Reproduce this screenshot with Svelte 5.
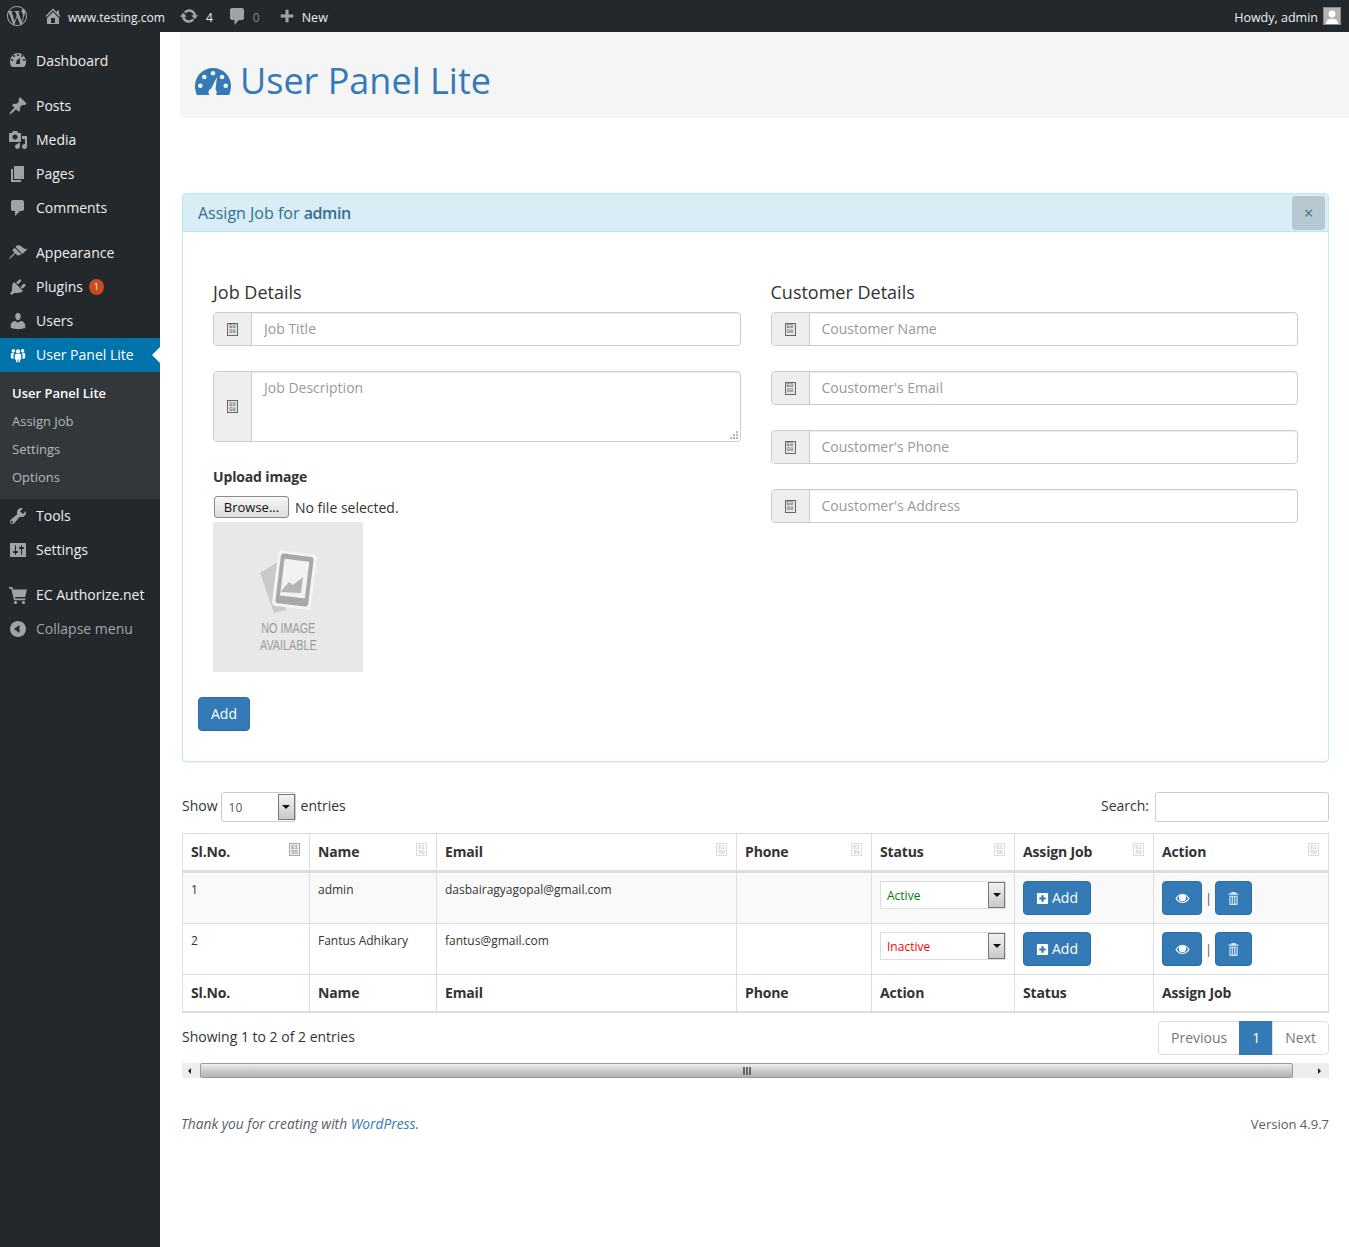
<script>
  const menuGroups = [
    [{ label: "Dashboard", icon: "dashboard" }],
    [
      { label: "Posts", icon: "posts" },
      { label: "Media", icon: "media" },
      { label: "Pages", icon: "pages" },
      { label: "Comments", icon: "comments" }
    ],
    [
      { label: "Appearance", icon: "appearance" },
      { label: "Plugins", icon: "plugins", badge: "1" },
      { label: "Users", icon: "users" },
      { label: "User Panel Lite", icon: "group", current: true, sub: ["User Panel Lite", "Assign Job", "Settings", "Options"] },
      { label: "Tools", icon: "tools" },
      { label: "Settings", icon: "settings" }
    ],
    [
      { label: "EC Authorize.net", icon: "cart" },
      { label: "Collapse menu", icon: "collapse", muted: true }
    ]
  ];

  const customerFields = ["Coustomer Name", "Coustomer's Email", "Coustomer's Phone", "Coustomer's Address"];

  const columns = [
    { name: "Sl.No.", foot: "Sl.No.", width: 127, code: ["E1", "55"], dark: true },
    { name: "Name", foot: "Name", width: 127, code: ["E1", "50"] },
    { name: "Email", foot: "Email", width: 300, code: ["E1", "50"] },
    { name: "Phone", foot: "Phone", width: 135, code: ["E1", "50"] },
    { name: "Status", foot: "Action", width: 143, code: ["E1", "50"] },
    { name: "Assign Job", foot: "Status", width: 139, code: ["E1", "50"] },
    { name: "Action", foot: "Assign Job", width: 175, code: ["E1", "50"] }
  ];

  const rows = [
    { id: 1, name: "admin", email: "dasbairagyagopal@gmail.com", status: "Active" },
    { id: 2, name: "Fantus Adhikary", email: "fantus@gmail.com", status: "Inactive" }
  ];
</script>

{#snippet menuIcon(name)}
  <svg class="menu-icon" viewBox="0 0 20 20" aria-hidden="true">
    {#if name === "dashboard"}
      <path fill-rule="evenodd" d="M3.76 16h12.48c1.1-1.43 1.76-3.21 1.76-5.14 0-4.66-3.58-8.86-8-8.860s-8 4.200-8 8.860c0 1.930.66 3.710 1.760 5.140zM10 3c.55 0 1 .45 1 1s-.45 1-1 1-1-.45-1-1 .45-1 1-1zM6 4c.55 0 1 .45 1 1s-.45 1-1 1-1-.45-1-1 .45-1 1-1zm8 0c.55 0 1 .45 1 1s-.45 1-1 1-1-.45-1-1 .45-1 1-1zm-5.370 5.550L12 7v6H8l.63-3.450zM4 8c.55 0 1 .45 1 1s-.45 1-1 1-1-.45-1-1 .45-1 1-1zm12 0c.55 0 1 .45 1 1s-.45 1-1 1-1-.45-1-1 .45-1 1-1z" />
    {:else if name === "posts"}
      <path d="M10.44 3.02l1.82-1.820 6.360 6.350-1.830 1.820c-1.050-.68-2.480-.57-3.410.36l-.75.75c-.92.93-1.040 2.350-.35 3.410l-1.830 1.820-2.410-2.410-2.800 2.790c-.42.42-3.380 2.710-3.800 2.290s1.860-3.390 2.280-3.810l2.790-2.790L4.100 9.360l1.830-1.820c1.050.69 2.480.57 3.400-.36l.75-.75c.93-.92 1.050-2.350.36-3.410z" />
    {:else if name === "media"}
      <path fill-rule="evenodd" d="M13 11V4c0-.55-.45-1-1-1h-1.670L9 1H5L3.670 3H2c-.55 0-1 .45-1 1v7c0 .55.45 1 1 1h10c.55 0 1-.45 1-1zM7 4.500c1.380 0 2.500 1.120 2.500 2.500S8.380 9.500 7 9.500 4.500 8.380 4.500 7 5.620 4.500 7 4.500z" />
      <path d="M14 6h5v10.500c0 1.380-1.120 2.500-2.500 2.500S14 17.880 14 16.500s1.120-2.500 2.500-2.500c.17 0 .34.020.5.050V9h-3V6zm-4 8.050V13h2v3.500c0 1.380-1.120 2.500-2.500 2.500S7 17.880 7 16.500 8.120 14 9.500 14c.17 0 .34.020.5.050z" />
    {:else if name === "pages"}
      <path d="M6 15V2h10v13H6zm-1 1h8v2H3V5h2v11z" />
    {:else if name === "comments"}
      <path d="M5 2h9c1.100 0 2 .9 2 2v7c0 1.100-.9 2-2 2h-2l-5 5v-5H5c-1.100 0-2-.9-2-2V4c0-1.100.9-2 2-2z" />
    {:else if name === "appearance"}
      <path d="M14.48 11.060L7.410 3.990l1.500-1.500c.5-.56 2.300-.47 3.510.32 1.210.8 1.430 1.280 2.910 2.100 1.180.64 2.450 1.260 4.450.85z" />
      <path d="M13.770 11.770L6.700 4.700 4.930 6.470c-.39.39-.39 1.020 0 1.410l1.060 1.060c.39.39.39 1.030 0 1.420-.6.6-1.430 1.150-2.210 1.930-1.470 1.470-2.890 3.700-2.780 3.800s2.330-1.310 3.800-2.780c.78-.78 1.330-1.610 1.930-2.210.39-.39 1.030-.39 1.420 0l1.060 1.060c.39.39 1.020.39 1.410 0z" />
    {:else if name === "plugins"}
      <path d="M13.110 4.360L9.870 7.600 8 5.730l3.240-3.240c.35-.34 1.050-.2 1.560.32.52.51.66 1.210.31 1.550zm-8 1.770l.91-1.120 9.010 9.010-1.190.84c-.71.71-2.630 1.160-3.820 1.160H6.140L4.900 17.260c-.59.59-1.540.59-2.120 0-.59-.58-.59-1.530 0-2.120l1.240-1.240v-3.880c0-1.130.4-3.050 1.090-3.890zm7.260 3.970l3.240-3.240c.34-.35 1.040-.21 1.550.31.52.51.66 1.210.31 1.550l-3.240 3.250z" />
    {:else if name === "users"}
      <path d="M10 9.250c-2.270 0-2.730-3.440-2.730-3.440C7 4.020 7.820 2 9.970 2c2.160 0 2.980 2.020 2.710 3.810 0 0-.41 3.440-2.680 3.440zm0 2.570L12.720 10c2.390 0 4.520 2.330 4.520 4.530v2.490s-3.650 1.130-7.240 1.130c-3.650 0-7.240-1.130-7.240-1.130v-2.490c0-2.250 1.940-4.480 4.470-4.480z" />
    {:else if name === "group"}
      <g transform="translate(1 1) scale(.9)">
        <circle cx="10" cy="6" r="2.400" /><circle cx="4.800" cy="5.300" r="1.900" /><circle cx="15.200" cy="5.300" r="1.900" />
        <path d="M6.500 10.200c0-1 1-1.600 2-1.600h3c1 0 2 .6 2 1.600v4.500l-1.300.5V18h-1.700v-3h-1v3H7.800v-2.800l-1.300-.5z" />
        <path d="M2 9.500c0-1.200.9-1.900 2-1.900h2.200c-.9.600-1.200 1.500-1.200 2.500v4.400l-1.500-.5-1.500-.8z" />
        <path d="M18 9.500c0-1.200-.9-1.900-2-1.900h-2.200c.9.600 1.200 1.500 1.200 2.500v4.400l1.500-.5 1.500-.8z" />
      </g>
    {:else if name === "tools"}
      <path fill-rule="evenodd" d="M16.680 9.770c-1.340 1.340-3.300 1.670-4.950.99l-5.410 6.520c-.99.99-2.590.99-3.570 0-.99-.98-.99-2.580 0-3.570l6.520-5.420c-.68-1.650-.35-3.610.99-4.950 1.280-1.280 3.120-1.620 4.720-1.060l-2.890 2.890 2.820 2.820 2.860-2.870c.53 1.580.18 3.390-1.090 4.650zM4.660 15.370c-.39-.39-1.030-.39-1.430 0-.39.4-.39 1.040 0 1.430.4.39 1.040.39 1.430 0 .4-.39.4-1.030 0-1.430z" />
    {:else if name === "settings"}
      <path fill-rule="evenodd" d="M18 16V4c0-.55-.45-1-1-1H3c-.55 0-1 .45-1 1v12c0 .55.45 1 1 1h14c.55 0 1-.45 1-1zM8 11h1c.55 0 1 .45 1 1s-.45 1-1 1H8v1.500c0 .28-.22.5-.5.5s-.5-.22-.5-.5V13H6c-.55 0-1-.45-1-1s.45-1 1-1h1V5.500c0-.28.22-.5.5-.5s.5.22.5.5V11zm5-2h-1c-.55 0-1-.45-1-1s.45-1 1-1h1V5.500c0-.28.22-.5.5-.5s.5.22.5.5V7h1c.55 0 1 .45 1 1s-.45 1-1 1h-1v5.500c0 .28-.22.5-.5.5s-.5-.22-.5-.5V9z" />
    {:else if name === "cart"}
      <path d="M1 2h3.500l.6 2.500H19l-1.800 7.500H7l.4 1.500h10v1.800H6L3.300 3.800H1z" /><circle cx="7.500" cy="17.500" r="1.600" /><circle cx="15.500" cy="17.500" r="1.600" />
    {:else if name === "collapse"}
      <path fill-rule="evenodd" d="M18 10c0-4.420-3.580-8-8-8s-8 3.580-8 8 3.580 8 8 8 8-3.580 8-8zm-6.500 4L6 10l5.500-4v8z" />
    {/if}
  </svg>
{/snippet}

{#snippet tofu(code, cls)}
  <span class="tofu {cls}" aria-hidden="true"><i>{code[0]}</i><i>{code[1]}</i></span>
{/snippet}

{#snippet addon()}
  <span class="addon">{@render tofu(["E0", "08"], "")}</span>
{/snippet}

{#snippet statusSelect(value)}
  <div class="status-select" class:active={value === "Active"} class:inactive={value === "Inactive"}>
    <span>{value}</span>
    <span class="drop"><b></b></span>
  </div>
{/snippet}

<div class="admin">
  <header class="adminbar">
    <div class="bar-left">
      <svg class="wp" viewBox="0 0 24 24" aria-hidden="true">
        <path d="M21.469 6.825c.84 1.537 1.318 3.3 1.318 5.175 0 3.979-2.156 7.456-5.363 9.325l3.295-9.527c.615-1.54.82-2.771.82-3.864 0-.405-.026-.78-.07-1.11m-7.981.105c.647-.03 1.232-.105 1.232-.105.582-.075.514-.93-.067-.899 0 0-1.755.135-2.88.135-1.064 0-2.85-.15-2.85-.15-.585-.03-.661.855-.075.885 0 0 .54.061 1.125.09l1.68 4.605-2.37 7.08L5.354 6.9c.649-.03 1.234-.1 1.234-.1.585-.075.516-.93-.065-.896 0 0-1.746.138-2.874.138-.2 0-.438-.008-.69-.015C4.911 3.15 8.235 1.215 12 1.215c2.809 0 5.365 1.072 7.286 2.833-.046-.003-.091-.009-.141-.009-1.06 0-1.812.923-1.812 1.914 0 .89.513 1.643 1.06 2.531.411.72.89 1.643.89 2.977 0 .915-.354 1.994-.821 3.479l-1.075 3.585-3.9-11.61.001.014zM12 22.784c-1.059 0-2.081-.153-3.048-.437l3.237-9.406 3.315 9.087c.024.053.05.101.078.149-1.12.393-2.325.609-3.582.609M1.211 12c0-1.564.336-3.05.935-4.39L7.29 21.709C3.694 19.96 1.212 16.271 1.211 12M12 0C5.385 0 0 5.385 0 12s5.385 12 12 12 12-5.385 12-12S18.615 0 12 0" />
      </svg>
      <svg class="bar-icon home" viewBox="0 0 20 20" aria-hidden="true">
        <path fill-rule="evenodd" d="M16 8.500l1.530 1.530-1.060 1.060L10 4.620l-6.470 6.470-1.060-1.060L10 2.500l4 4v-2h2v4zm-6-2.460l6 5.990V18H4v-5.970zM12 17v-5H8v5h4z" />
      </svg>
      <span class="site">www.testing.com</span>
      <svg class="bar-icon updates" viewBox="0 0 20 20" aria-hidden="true">
        <path d="M10.200 3.280c3.530 0 6.430 2.610 6.920 6h2.080l-3.500 4-3.500-4h2.320c-.45-1.970-2.210-3.440-4.320-3.440-1.450 0-2.730.71-3.540 1.780L4.950 5.660C6.230 4.200 8.110 3.280 10.200 3.280zm-.4 13.440c-3.520 0-6.430-2.610-6.920-6H.8l3.500-4c1.170 1.330 2.330 2.670 3.500 4H5.480c.45 1.970 2.210 3.440 4.320 3.440 1.450 0 2.730-.71 3.540-1.770l1.710 1.950c-1.280 1.460-3.150 2.380-5.250 2.380z" />
      </svg>
      <span class="count">4</span>
      <svg class="bar-icon bubble" viewBox="0 0 20 20" aria-hidden="true">
        <path d="M5 2h10c1.100 0 2 .9 2 2v8c0 1.100-.9 2-2 2h-3l-4.500 5v-5H5c-1.100 0-2-.9-2-2V4c0-1.100.9-2 2-2z" />
      </svg>
      <span class="count zero">0</span>
      <svg class="bar-icon plus" viewBox="0 0 20 20" aria-hidden="true">
        <path d="M8.300 3h3.400v5.300H17v3.400h-5.300V17H8.300v-5.300H3V8.300h5.300z" />
      </svg>
      <span class="new">New</span>
    </div>
    <div class="howdy">
      <span class="hello">Howdy, admin</span>
      <span class="avatar">
        <svg viewBox="0 0 16 16" aria-hidden="true">
          <rect width="16" height="16" fill="#b4b4b4" />
          <circle cx="8" cy="6" r="3.400" fill="#fff" /><path d="M2 16c0-3.500 2.500-5.300 6-5.300s6 1.800 6 5.300z" fill="#fff" />
        </svg>
      </span>
    </div>
  </header>

  <div class="wrap">
    <nav class="sidebar">
      {#each menuGroups as group}
        <ul class="group">
          {#each group as item}
            <li class="item" class:current={item.current} class:muted={item.muted}>
              {@render menuIcon(item.icon)}
              <span class="label">{item.label}</span>
              {#if item.badge}<span class="badge">{item.badge}</span>{/if}
            </li>
            {#if item.sub}
              <li class="submenu">
                {#each item.sub as sub, i}
                  <div class="sub-item" class:sub-current={i === 0}>{sub}</div>
                {/each}
              </li>
            {/if}
          {/each}
        </ul>
      {/each}
    </nav>

    <main class="content">
      <div class="page-header">
        <svg class="gauge" viewBox="0 0 36 30" aria-hidden="true">
          <path fill="#337ab7" d="M18 1C8.100 1 0 9 0 18.800c0 3.300.8 6.700 1.900 9.200h32.200c1.100-2.500 1.900-5.900 1.900-9.200C36 9 27.900 1 18 1z" />
          <g fill="#f5f5f5">
            <circle cx="18" cy="6.300" r="2.300" /><circle cx="9.300" cy="10" r="2.300" /><circle cx="27" cy="10" r="2.300" />
            <circle cx="5.300" cy="18.700" r="2.300" /><circle cx="30.700" cy="18.700" r="2.300" />
            <path d="M22 10l-1.500 12.500a4.100 4.100 0 1 1-4.300-.9z" />
          </g>
        </svg>
        <h1>User Panel Lite</h1>
      </div>

      <section class="panel">
        <div class="panel-heading">
          <span>Assign Job for <strong>admin</strong></span>
          <button class="close" type="button">×</button>
        </div>
        <div class="panel-body">
          <div class="columns">
            <div class="col">
              <h4>Job Details</h4>
              <div class="input-group">
                {@render addon()}
                <input type="text" placeholder="Job Title" />
              </div>
              <div class="input-group area">
                {@render addon()}
                <textarea placeholder="Job Description"></textarea>
                <svg class="resize-dots" viewBox="0 0 8 8" aria-hidden="true">
                  <rect x="6" y="0" width="2" height="2" /><rect x="3" y="3" width="2" height="2" /><rect x="6" y="3" width="2" height="2" />
                  <rect x="0" y="6" width="2" height="2" /><rect x="3" y="6" width="2" height="2" /><rect x="6" y="6" width="2" height="2" />
                </svg>
              </div>
              <label class="upload-label" for="upload">Upload image</label>
              <div class="file-row" id="upload">
                <button type="button" class="browse">Browse...</button>
                <span>No file selected.</span>
              </div>
              <div class="no-image">
                <svg viewBox="0 0 64 68" aria-hidden="true">
                  <path d="M2 24L20 13l8 48-12 3z" fill="#c9c9c9" />
                  <rect x="17" y="3" width="39" height="56" rx="4" transform="rotate(7 36 31)" fill="#f4f4f4" />
                  <rect x="20" y="6" width="33" height="50" rx="3" transform="rotate(7 36 31)" fill="#a8a8a8" />
                  <rect x="24" y="11" width="25" height="37" transform="rotate(7 36 31)" fill="#f2f2f2" />
                  <path d="M24 41l7-8 4 3 10-8-2 16-20-1z" fill="#b4b4b4" />
                </svg>
                <p>NO IMAGE<br />AVAILABLE</p>
              </div>
            </div>
            <div class="col">
              <h4>Customer Details</h4>
              {#each customerFields as field}
                <div class="input-group">
                  {@render addon()}
                  <input type="text" placeholder={field} />
                </div>
              {/each}
            </div>
          </div>
          <button type="button" class="btn add-job">Add</button>
        </div>
      </section>

      <div class="dt-top">
        <div class="dt-length">
          <span class="dt-text">Show</span>
          <div class="length-select"><span>10</span><span class="drop"><b></b></span></div>
          <span class="dt-text entries">entries</span>
        </div>
        <div class="dt-search">
          <span class="dt-text">Search:</span>
          <input type="search" aria-label="Search" />
        </div>
      </div>

      <table class="jobs">
        <colgroup>
          {#each columns as col}<col style="width: {col.width}px" />{/each}
        </colgroup>
        <thead>
          <tr>
            {#each columns as col}
              <th>
                <span class="th-inner">
                  {col.name}
                  {@render tofu(col.code, col.dark ? "sort dark" : "sort")}
                </span>
              </th>
            {/each}
          </tr>
        </thead>
        <tbody>
          {#each rows as row, i}
            <tr class:odd={i % 2 === 0}>
              <td>{row.id}</td>
              <td>{row.name}</td>
              <td>{row.email}</td>
              <td></td>
              <td class="ctl">{@render statusSelect(row.status)}</td>
              <td class="ctl">
                <button type="button" class="btn assign">
                  <svg viewBox="0 0 14 14" aria-hidden="true">
                    <path fill="#fff" fill-rule="evenodd" d="M2 1h10a1 1 0 0 1 1 1v10a1 1 0 0 1-1 1H2a1 1 0 0 1-1-1V2a1 1 0 0 1 1-1zm3.800 2.500v2.300H3.500v2.400h2.300v2.300h2.400V8.200h2.300V5.800H8.200V3.500z" />
                  </svg>
                  Add
                </button>
              </td>
              <td class="ctl">
                <div class="actions">
                  <button type="button" class="btn icon view" aria-label="View">
                    <svg viewBox="0 0 16 12" aria-hidden="true">
                      <path fill="#fff" fill-rule="evenodd" d="M8 1c3.300 0 6 2 7.700 5C14 9 11.300 11 8 11S2 9 .3 6C2 3 4.700 1 8 1zM5 2.800C3.700 3.500 2.600 4.600 1.800 6 3.300 8.300 5.500 9.800 8 9.800s4.700-1.500 6.200-3.800c-.8-1.400-1.900-2.500-3.200-3.200.6.700.9 1.500.9 2.400A3.900 3.900 0 0 1 8 9.100a3.900 3.900 0 0 1-3.900-3.900c0-.9.300-1.700.9-2.400z" />
                    </svg>
                  </button>
                  <span class="pipe">|</span>
                  <button type="button" class="btn icon trash" aria-label="Delete">
                    <svg viewBox="0 0 12 14" aria-hidden="true">
                      <path fill="#dbeaf7" fill-rule="evenodd" d="M4 0h4l1 1.500h2.500v1.500H.5V1.500H3zM1.500 4h9v9a1 1 0 0 1-1 1h-7a1 1 0 0 1-1-1zm1.200 1.200V12.800h1.300V5.200zm2.600 0V12.800h1.400V5.200zm2.700 0V12.800h1.300V5.200z" />
                    </svg>
                  </button>
                </div>
              </td>
            </tr>
          {/each}
        </tbody>
        <tfoot>
          <tr>
            {#each columns as col}<th>{col.foot}</th>{/each}
          </tr>
        </tfoot>
      </table>

      <div class="dt-bottom">
        <span class="dt-text">Showing 1 to 2 of 2 entries</span>
        <div class="pagination">
          <span class="page">Previous</span>
          <span class="page on">1</span>
          <span class="page next">Next</span>
        </div>
      </div>

      <div class="scrollbar" aria-hidden="true">
        <span class="arrow left"></span>
        <div class="thumb"><span class="grip"><i></i><i></i><i></i></span></div>
        <span class="arrow right"></span>
      </div>

      <footer class="foot">
        <em>Thank you for creating with <span class="link">WordPress</span>.</em>
        <span>Version 4.9.7</span>
      </footer>
    </main>
  </div>
</div>

<style>
  :global(body) {
    margin: 0;
    background: #fff;
    font-family: "Open Sans", sans-serif;
    font-size: 14px;
    color: #333;
  }

  .admin {
    height: 1247px;
    overflow: hidden;
  }

  /* top bar */
  .adminbar {
    height: 32px;
    background: #23282d;
    color: #eee;
    font-size: 13px;
    display: flex;
    align-items: center;
    justify-content: space-between;
  }

  .bar-left {
    display: flex;
    align-items: center;
    padding-left: 7px;
  }

  .bar-left span,
  .hello {
    padding-top: 2px;
  }

  .wp {
    width: 20px;
    height: 20px;
    fill: #9ea3a8;
    margin-right: 16px;
  }

  .bar-icon {
    width: 20px;
    height: 20px;
    fill: #9ea3a8;
    flex: none;
  }

  .home {
    margin-right: 5px;
  }

  .site {
    margin-right: 14px;
    font-size: 12.1px;
  }

  .updates {
    margin-right: 7px;
  }

  .count {
    margin-right: 14px;
    font-size: 12px;
  }

  .count.zero {
    margin-left: 6px;
    color: #82878c;
    margin-right: 18px;
  }

  .plus {
    margin-right: 6px;
    width: 18px;
    height: 18px;
  }

  .new {
    font-size: 12.5px;
  }

  .howdy {
    display: flex;
    align-items: center;
    gap: 5px;
    padding-right: 8px;
    font-size: 12.5px;
  }

  .avatar {
    width: 16px;
    height: 16px;
    border: 1px solid #888;
    display: block;
  }

  .avatar svg {
    display: block;
  }

  /* sidebar */
  .wrap {
    display: flex;
    height: 1215px;
  }

  .sidebar {
    width: 160px;
    flex: none;
    background: #23282d;
    padding-top: 12px;
    box-sizing: border-box;
  }

  .group {
    list-style: none;
    margin: 0 0 11px;
    padding: 0;
  }

  .item {
    height: 34px;
    display: flex;
    align-items: center;
    padding-left: 8px;
    color: #eee;
    position: relative;
  }

  .label {
    padding-bottom: 2px;
  }

  .item.muted {
    color: #a0a5aa;
  }

  .menu-icon {
    width: 20px;
    height: 20px;
    fill: #9ea3a8;
    margin-right: 8px;
    flex: none;
  }

  .item.current {
    background: #0073aa;
    color: #fff;
  }

  .item.current .menu-icon {
    fill: #fff;
  }

  .item.current::after {
    content: "";
    position: absolute;
    right: 0;
    top: 50%;
    margin-top: -8px;
    border: 8px solid transparent;
    border-right-color: #fff;
    border-left-width: 0;
  }

  .badge {
    width: 15px;
    height: 16px;
    border-radius: 50%;
    background: #ca4a1f;
    color: #fff;
    font-size: 9px;
    line-height: 16px;
    text-align: center;
    margin-left: 6px;
  }

  .submenu {
    background: #32373c;
    padding: 7px 0 8px;
  }

  .sub-item {
    height: 28px;
    line-height: 28px;
    padding-left: 12px;
    font-size: 13px;
    color: #b4b9be;
  }

  .sub-current {
    color: #fff;
    font-weight: 600;
  }

  /* content */
  .content {
    flex: 1;
    min-width: 0;
    padding: 0 20px;
  }

  .page-header {
    height: 86px;
    margin: 0 -20px 75px 0;
    background: #f5f5f5;
    border-bottom-left-radius: 4px;
    display: flex;
    align-items: center;
    padding: 12px 0 0 15px;
    box-sizing: border-box;
  }

  .gauge {
    width: 36px;
    height: 30px;
    margin-top: 2px;
    margin-right: 9px;
  }

  h1 {
    margin: 0;
    font-size: 36px;
    font-weight: 400;
    color: #337ab7;
    line-height: 1.1;
  }

  .panel {
    margin-left: 2px;
    border: 1px solid #bce8f1;
    border-radius: 4px;
    box-shadow: 0 1px 1px rgba(0, 0, 0, 0.05);
    box-sizing: border-box;
    height: 569px;
  }

  .panel-heading {
    height: 37px;
    background: #d9edf7;
    border-bottom: 1px solid #bce8f1;
    color: #31708f;
    font-size: 16px;
    display: flex;
    align-items: center;
    justify-content: space-between;
    padding: 0 3px 0 15px;
    border-radius: 3px 3px 0 0;
  }

  .panel-heading strong {
    font-weight: 600;
    letter-spacing: -0.4px;
  }

  .close {
    width: 33px;
    height: 34px;
    border: 0;
    border-radius: 4px;
    background: #b6c7d1;
    color: #31708f;
    font-size: 16px;
    font-family: inherit;
    padding: 0;
  }

  .panel-body {
    padding: 0 15px;
  }

  .columns {
    display: flex;
    gap: 30px;
    padding: 0 15px;
  }

  .col {
    flex: 1;
    min-width: 0;
  }

  h4 {
    font-size: 18px;
    font-weight: 400;
    margin: 47px 0 7px;
    line-height: 26px;
    color: #333;
  }

  .input-group {
    display: flex;
    height: 34px;
    margin-bottom: 25px;
    box-sizing: border-box;
    border: 1px solid #ccc;
    border-radius: 4px;
    box-shadow: inset 0 1px 1px rgba(0, 0, 0, 0.075);
    overflow: hidden;
    position: relative;
  }

  .input-group.area {
    height: 71px;
    margin-bottom: 25px;
  }

  .addon {
    width: 38px;
    box-sizing: border-box;
    flex: none;
    background: #eee;
    border-right: 1px solid #ccc;
    display: flex;
    align-items: center;
    justify-content: center;
  }

  .input-group input,
  .input-group textarea {
    flex: 1;
    min-width: 0;
    border: 0;
    outline: 0;
    padding: 6px 12px;
    font: 14px/20px "Open Sans", sans-serif;
    color: #555;
    background: transparent;
  }

  textarea {
    resize: none;
  }

  .resize-dots {
    position: absolute;
    right: 2px;
    bottom: 2px;
    width: 8px;
    height: 8px;
    fill: #b5b5b5;
  }

  input::placeholder,
  textarea::placeholder {
    color: #999;
    opacity: 1;
  }

  .tofu {
    box-sizing: border-box;
    width: 11px;
    height: 13px;
    border: 1px solid #666;
    background: #e6e6e6;
    display: inline-flex;
    flex-direction: column;
    align-items: center;
    justify-content: center;
    font-family: "Liberation Mono", monospace;
    font-size: 5.5px;
    line-height: 5px;
    color: #555;
    overflow: hidden;
  }

  .tofu i {
    font-style: normal;
    display: block;
  }

  .tofu.sort {
    border-color: #ddd;
    background: #fff;
    color: #ccc;
    position: absolute;
    right: 1px;
    top: 1px;
  }

  .tofu.sort.dark {
    border-color: #aaa;
    color: #999;
    background: #eee;
  }

  .upload-label {
    display: block;
    font-weight: 700;
    letter-spacing: -0.15px;
    line-height: 20px;
    margin-bottom: 9px;
  }

  .file-row {
    display: flex;
    align-items: center;
    gap: 6px;
    height: 22px;
    margin-bottom: 4px;
  }

  .browse {
    width: 75px;
    height: 22px;
    margin-left: 1px;
    padding: 0;
    border: 1px solid #8a8a8a;
    border-radius: 3px;
    background: linear-gradient(#f6f6f6, #dcdcdc);
    font: 13px "Open Sans", sans-serif;
    color: #111;
  }

  .no-image {
    width: 150px;
    height: 150px;
    background: #e8e8e8;
    display: flex;
    flex-direction: column;
    align-items: center;
    color: #9a9a9a;
  }

  .no-image svg {
    width: 64px;
    height: 68px;
    margin-top: 27px;
    margin-left: 4px;
    flex: none;
  }

  .no-image p {
    margin: 2px 0 0;
    font-family: "Liberation Sans", sans-serif;
    font-size: 15px;
    line-height: 17px;
    text-align: center;
    transform: scaleX(0.72);
  }

  .btn {
    background: #337ab7;
    border: 1px solid #2e6da4;
    border-radius: 4px;
    color: #fff;
    font: 14px/20px "Open Sans", sans-serif;
    padding: 6px 12px;
  }

  .add-job {
    display: block;
    margin-top: 25px;
  }

  /* datatable */
  .dt-top {
    display: flex;
    justify-content: space-between;
    align-items: center;
    margin: 30px 0 11px 2px;
    height: 30px;
  }

  .dt-length,
  .dt-search {
    display: flex;
    align-items: center;
    gap: 3px;
  }

  .dt-search {
    gap: 6px;
  }

  .dt-text {
    padding-bottom: 4px;
  }

  .entries {
    margin-left: 2px;
  }

  .length-select {
    width: 75px;
    height: 30px;
    box-sizing: border-box;
    border: 1px solid #ccc;
    border-radius: 3px;
    display: flex;
    align-items: center;
    justify-content: space-between;
    padding-left: 7px;
    font-size: 12px;
    color: #555;
  }

  .dt-search input {
    width: 174px;
    height: 30px;
    box-sizing: border-box;
    border: 1px solid #ccc;
    border-radius: 3px;
    outline: 0;
  }

  .drop {
    width: 17px;
    height: 26px;
    box-sizing: border-box;
    border: 1px solid #777;
    background: linear-gradient(#f2f2f2, #c9c9c9);
    display: flex;
    align-items: center;
    justify-content: center;
    flex: none;
  }

  .drop b {
    border: 4px solid transparent;
    border-top-color: #111;
    border-bottom-width: 0;
  }

  table.jobs {
    margin-left: 2px;
    width: 1146px;
    border-collapse: collapse;
    table-layout: fixed;
    font-size: 12px;
  }

  .jobs th,
  .jobs td {
    border: 1px solid #ddd;
    text-align: left;
    box-sizing: border-box;
  }

  .jobs th {
    font-size: 14px;
    font-weight: 700;
    letter-spacing: -0.15px;
    padding: 8px;
    line-height: 20px;
    color: #333;
  }

  .jobs thead th {
    border-bottom-width: 3px;
    height: 38px;
  }

  .jobs tfoot th {
    border-top-width: 1px;
    border-bottom-width: 2px;
    height: 36px;
  }

  .th-inner {
    display: block;
    position: relative;
  }

  .jobs td {
    height: 52px;
    padding: 8px;
    vertical-align: top;
    line-height: 17px;
  }

  .jobs tbody tr:last-child td {
    height: 51px;
  }

  .jobs td.ctl {
    padding: 8px 8px 0;
  }

  .odd td {
    background: #f9f9f9;
  }

  .status-select {
    width: 126px;
    height: 28px;
    box-sizing: border-box;
    border: 1px solid #ddd;
    background: #fff;
    display: flex;
    align-items: center;
    justify-content: space-between;
    padding-left: 6px;
    font-size: 12px;
  }

  .status-select > span:first-child {
    padding-top: 1px;
  }

  .status-select.active {
    color: green;
  }

  .status-select.inactive {
    color: red;
  }

  .btn.assign {
    width: 68px;
    height: 34px;
    padding: 0;
    font-size: 14px;
    display: flex;
    align-items: center;
    justify-content: center;
    gap: 3px;
  }

  .assign svg {
    width: 13px;
    height: 13px;
  }

  .actions {
    display: flex;
    align-items: center;
    gap: 3px;
  }

  .btn.icon {
    height: 34px;
    padding: 0;
    display: flex;
    align-items: center;
    justify-content: center;
  }

  .view {
    width: 40px;
  }

  .view svg {
    width: 15px;
    height: 11px;
  }

  .trash {
    width: 37px;
  }

  .trash svg {
    width: 11px;
    height: 13px;
  }

  .pipe {
    color: #555;
    font-size: 13px;
  }

  .dt-bottom {
    display: flex;
    justify-content: space-between;
    align-items: center;
    margin: 8px 0 8px 2px;
    height: 34px;
  }

  .pagination {
    display: flex;
  }

  .page {
    height: 34px;
    box-sizing: border-box;
    border: 1px solid #ddd;
    margin-left: -1px;
    padding: 6px 12px;
    line-height: 20px;
    color: #777;
    background: #fff;
  }

  .page:first-child {
    border-radius: 4px 0 0 4px;
  }

  .page:last-child {
    border-radius: 0 4px 4px 0;
  }

  .page.on {
    background: #337ab7;
    border-color: #337ab7;
    color: #fff;
  }

  .page.next {
    padding-right: 12px;
  }

  .scrollbar {
    margin-left: 2px;
    height: 15px;
    background: #ededed;
    display: flex;
    align-items: center;
  }

  .arrow {
    flex: none;
    display: flex;
    justify-content: center;
  }

  .arrow.left {
    width: 15px;
    margin-right: 3px;
  }

  .arrow.right {
    width: 19px;
    margin-left: 17px;
  }

  .arrow::before {
    content: "";
    border: 3.500px solid transparent;
  }

  .arrow.left::before {
    border-right-color: #222;
    border-left-width: 0;
  }

  .arrow.right::before {
    border-left-color: #222;
    border-right-width: 0;
  }

  .thumb {
    flex: 1;
    height: 15px;
    box-sizing: border-box;
    border: 1px solid #9a9a9a;
    border-radius: 2px;
    background: linear-gradient(#ececec, #c6c6c6 60%, #b4b4b4);
    display: flex;
    align-items: center;
    justify-content: center;
  }

  .grip {
    display: flex;
    gap: 1px;
  }

  .grip i {
    width: 2px;
    height: 8px;
    background: #666;
  }

  .foot {
    display: flex;
    justify-content: space-between;
    margin-top: 37px;
    font-size: 13px;
    line-height: 18px;
    color: #555d66;
    padding-left: 1px;
  }

  .foot em {
    font-size: 13.75px;
  }

  .link {
    color: #337ab7;
  }
</style>
